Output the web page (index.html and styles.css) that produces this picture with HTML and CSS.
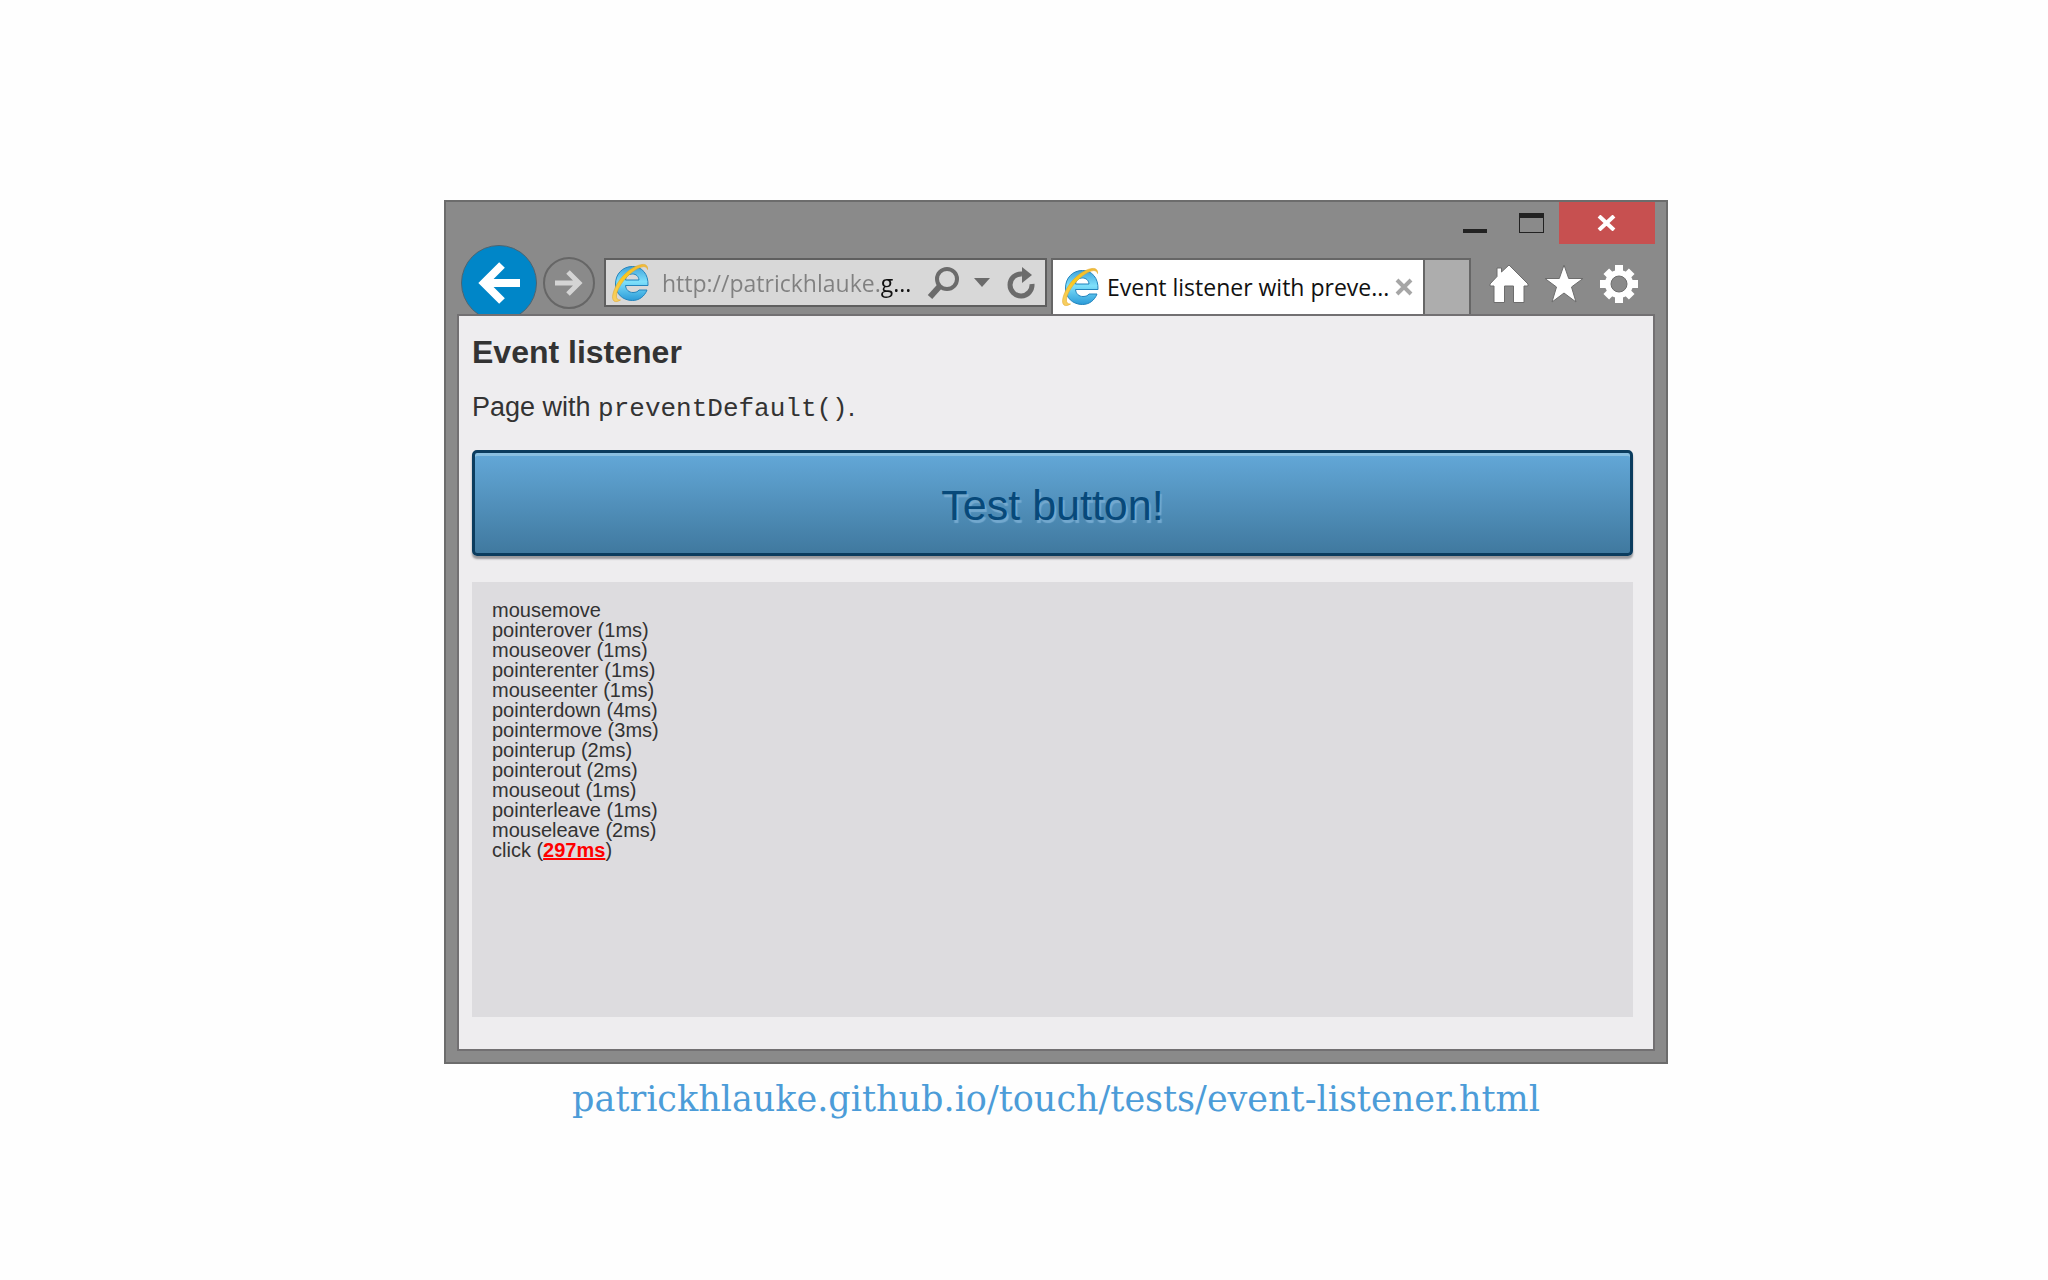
FILE: index.html
```html
<!DOCTYPE html>
<html lang="en">

<head>
    <title>Event listener</title>
    <meta charset="UTF-8">
    <meta name="viewport" content="width=device-width, initial-scale=1">
    <link rel="stylesheet" href="styles.css">
</head>

<body>
    <svg class="defs" width="0" height="0" aria-hidden="true">
        <defs>
            <linearGradient id="blue" x1="0" y1="0" x2="0" y2="1">
                <stop offset="0" stop-color="#3fa3da" />
                <stop offset="0.45" stop-color="#7fe0fb" />
                <stop offset="1" stop-color="#2b9bd8" />
            </linearGradient>
            <linearGradient id="gold" x1="0" y1="1" x2="1" y2="0">
                <stop offset="0" stop-color="#f7cf6b" />
                <stop offset="0.5" stop-color="#fbc91b" />
                <stop offset="1" stop-color="#f0b93a" />
            </linearGradient>
        </defs>
        <symbol id="ie" viewBox="0 0 38 40">
            <path d="M37 22.500H14.500C15 27 18 29.500 22 29.500C25 29.500 27 28.500 28 27H36C33.500 33.500 28 37.500 21.500 37.500C11.500 37.500 4.500 30.500 4.500 21C4.500 11 11.500 3.500 21.500 3.500C31 3.500 37.500 11 37 22.500ZM14.500 17H28C27.500 13 25 11 21.500 11C17.500 11 15.200 13 14.500 17Z"
                fill="url(#blue)" stroke="#2384bd" stroke-width="1" />
            <path d="M36.500 6.500C37 2.500 34.500 1 31 1.500C23 2.500 13 10 7 19.500C2 27.500 0 35.500 3 38C4.500 39.200 7 38.500 9.500 37C6.500 37 5 35.500 5.500 32C6.200 27 10 20.500 15 15C21 8.500 28 4 32.500 3.600C34.700 3.400 36 4.500 36.500 6.500Z"
                fill="url(#gold)" stroke="#e2a92c" stroke-width="0.600" />
        </symbol>
    </svg>

    <main class="slide">
        <div class="window">
            <div class="title-bar">
                <button class="title-button" type="button" aria-label="Minimize"><span class="minimize"></span></button>
                <button class="title-button" type="button" aria-label="Maximize"><span class="maximize"></span></button>
                <button class="title-button close" type="button" aria-label="Close">
                    <svg width="20" height="16" viewBox="0 0 20 16">
                        <path d="M2 1L17 15M17 1L2 15" stroke="#fff" stroke-width="4" />
                    </svg>
                </button>
            </div>

            <div class="nav-bar">
                <button class="back" type="button" aria-label="Back">
                    <svg width="44" height="42" viewBox="0 0 44 42">
                        <path d="M43 21H7M25 3L7 21L25 39" fill="none" stroke="#fff" stroke-width="8" />
                    </svg>
                </button>
                <button class="forward" type="button" aria-label="Forward">
                    <svg width="28" height="28" viewBox="0 0 28 28">
                        <path d="M0 14H24M13 3L24 14L13 25" fill="none" stroke="#d4d4d4" stroke-width="5" />
                    </svg>
                </button>

                <div class="address">
                    <svg class="ie-icon" width="38" height="40"><use href="#ie" /></svg>
                    <input class="address-input" type="text" value="http://patrickhlauke.g..." aria-label="Address" readonly>
                    <button class="tool" type="button" aria-label="Search">
                        <svg width="34" height="34" viewBox="0 0 34 34">
                            <circle cx="20" cy="13" r="10" fill="none" stroke="#6b6b6b" stroke-width="4" />
                            <path d="M12.500 20.500L3 31" stroke="#6b6b6b" stroke-width="6" />
                        </svg>
                    </button>
                    <button class="tool" type="button" aria-label="Show address bar history">
                        <svg width="16" height="9" viewBox="0 0 16 9">
                            <path d="M0 0H16L8 9Z" fill="#6b6b6b" />
                        </svg>
                    </button>
                    <button class="tool" type="button" aria-label="Refresh">
                        <svg width="33" height="34" viewBox="-4 0 33 34">
                            <path d="M15 8A11 11 0 1 0 25 18" fill="none" stroke="#6b6b6b" stroke-width="5" />
                            <path d="M15 1L25 9L15 17Z" fill="#6b6b6b" />
                        </svg>
                    </button>
                </div>

                <div class="tab">
                    <svg class="ie-icon" width="38" height="40"><use href="#ie" /></svg>
                    <span class="tab-title">Event listener with preve...</span>
                    <button class="tool" type="button" aria-label="Close tab">
                        <svg width="18" height="18" viewBox="0 0 18 18">
                            <path d="M2 2L16 16M16 2L2 16" stroke="#a6a6a6" stroke-width="4" />
                        </svg>
                    </button>
                </div>
                <button class="new-tab" type="button" aria-label="New tab"></button>

                <div class="toolbar">
                    <button class="tool" type="button" aria-label="Home">
                        <svg width="40" height="40" viewBox="0 0 40 40">
                            <path d="M20 1L12.500 8V4H8V12.500L1 20V22H5V38.500H15.500V22H24.500V38.500H35V22H39V20Z" fill="#fff"
                                stroke="#6d6d6d" stroke-width="1" />
                        </svg>
                    </button>
                    <button class="tool" type="button" aria-label="Favorites">
                        <svg width="40" height="40" viewBox="0 0 40 40">
                            <path d="M20 1L24.700 14.500H39L27.500 23L32 38L20 29L8 38L12.500 23L1 14.500H15.300Z" fill="#fff"
                                stroke="#6d6d6d" stroke-width="1" />
                        </svg>
                    </button>
                    <button class="tool" type="button" aria-label="Tools">
                        <svg width="40" height="40" viewBox="0 0 40 40">
                            <g fill="#fff">
                                <path d="M16 1H24V39H16ZM1 16H39V24H1Z" />
                                <path d="M16 2H24V38H16ZM2 16H38V24H2Z" transform="rotate(45 20 20)" />
                            </g>
                            <circle cx="20" cy="20" r="14" fill="#fff" />
                            <circle cx="20" cy="20" r="8" fill="#8a8a8a" stroke="#6d6d6d" stroke-width="1" />
                        </svg>
                    </button>
                </div>
            </div>

            <div class="page">
                <h1 class="heading">Event listener</h1>
                <p class="intro">Page with <code>preventDefault()</code>.</p>
                <button class="test-button" type="button">Test button!</button>
                <div class="log">
                    mousemove<br>
                    pointerover (1ms)<br>
                    mouseover (1ms)<br>
                    pointerenter (1ms)<br>
                    mouseenter (1ms)<br>
                    pointerdown (4ms)<br>
                    pointermove (3ms)<br>
                    pointerup (2ms)<br>
                    pointerout (2ms)<br>
                    mouseout (1ms)<br>
                    pointerleave (1ms)<br>
                    mouseleave (2ms)<br>
                    click (<strong class="delay">297ms</strong>)
                </div>
            </div>
        </div>
        <a class="source" href="https://patrickhlauke.github.io/touch/tests/event-listener.html">patrickhlauke.github.io/touch/tests/event-listener.html</a>
    </main>
</body>

</html>
```
FILE: styles.css
```css
* {
    box-sizing: border-box;
}

body {
    margin: 0;
    background-color: #fefefe;
    font-family: "Liberation Sans", Arial, sans-serif;
    color: #333;
}

button {
    padding: 0;
    border: none;
    background: none;
    font-family: inherit;
    cursor: pointer;
}

svg {
    display: block;
    flex-shrink: 0;
}

.defs {
    position: absolute;
}

.slide {
    min-height: 100vh;
    padding: 200px 0 0 64px;
    display: flex;
    flex-direction: column;
    align-items: center;
}

/* browser window */
.window {
    width: 100%;
    max-width: 1224px;
    padding-bottom: 11px;
    border: 2px solid #6c6c6c;
    background-color: #8a8a8a;
}

.title-bar {
    display: flex;
    justify-content: flex-end;
    padding-right: 11px;
}

.title-button {
    width: 56px;
    height: 42px;
    display: flex;
    align-items: flex-end;
    justify-content: center;
    padding-bottom: 11px;
}

.title-button.close {
    width: 96px;
    align-items: center;
    padding: 0;
    background-color: #c75050;
}

.minimize {
    width: 24px;
    height: 4px;
    background-color: #222;
}

.maximize {
    width: 25px;
    height: 20px;
    border: 1px solid #222;
    border-top-width: 5px;
}

.nav-bar {
    display: flex;
    align-items: flex-start;
    height: 70px;
    padding: 0 27px 0 15px;
    overflow: hidden;
}

.back,
.forward {
    display: flex;
    align-items: center;
    justify-content: center;
    flex-shrink: 0;
    border-radius: 50%;
}

.back {
    width: 76px;
    height: 76px;
    margin-top: 1px;
    border: 1px solid #4f6470;
    background-color: #0086c8;
}

.forward {
    width: 52px;
    height: 52px;
    margin: 13px 9px 0 6px;
    border: 2px solid #666;
}

.address {
    flex: 1;
    min-width: 0;
    height: 49px;
    margin: 14px 4px 0 0;
    padding: 0 9px 0 5px;
    display: flex;
    align-items: center;
    gap: 13px;
    border: 2px solid #5f5f5f;
    background-color: #d8d8d8;
}

/* host part of the url is darker than the rest */
.address-input {
    flex: 1;
    min-width: 0;
    padding: 0;
    border: none;
    outline: none;
    background: linear-gradient(to right, #808080 218px, #111 218px);
    -webkit-background-clip: text;
    background-clip: text;
    color: transparent;
    font-family: "Open Sans", "Noto Sans", sans-serif;
    font-size: 23px;
}

.tab {
    width: 374px;
    height: 56px;
    margin-top: 14px;
    padding: 0 10px 0 8px;
    display: flex;
    align-items: center;
    border: 2px solid #666;
    border-bottom: none;
    background-color: #fff;
    color: #111;
    font-family: "Open Sans", "Noto Sans", sans-serif;
    font-size: 23px;
}

.tab-title {
    flex: 1;
    margin-left: 8px;
    white-space: nowrap;
}

.new-tab {
    width: 46px;
    height: 56px;
    margin-top: 14px;
    border: 2px solid #666;
    border-width: 2px 2px 0 0;
    background-color: #adadad;
}

.toolbar {
    display: flex;
    gap: 15px;
    margin: 20px 0 0 18px;
}

/* page shown in the window */
.page {
    margin: 0 11px;
    padding: 18px 20px 32px 13px;
    border: 2px solid #727072;
    background-color: #eeedef;
}

.heading {
    margin: 0 0 21px;
    font-size: 32px;
    line-height: 36px;
}

.intro {
    margin: 0 0 25px;
    font-size: 27px;
    line-height: 32px;
}

.intro code {
    font-family: "Liberation Mono", "Courier New", monospace;
    font-size: 26px;
}

.test-button {
    display: block;
    width: 100%;
    height: 106px;
    padding-top: 5px;
    border: 3px solid #0b3c5e;
    border-radius: 5px;
    background: linear-gradient(#63a8d8, #40799f);
    box-shadow: inset 0 3px 0 #8abfe0, 0 3px 2px #99999c;
    color: #07497a;
    font-size: 43px;
    text-shadow: 2px 3px 1px #74a9cf;
}

.log {
    min-height: 435px;
    margin-top: 26px;
    padding: 18px 20px;
    background-color: #dddcdf;
    font-size: 20px;
    line-height: 20px;
}

.delay {
    color: #f00;
    text-decoration: underline;
}

.source {
    margin-top: 14px;
    color: #4c9cd8;
    font-family: "Roboto Slab", "DejaVu Serif", serif;
    font-size: 35px;
    line-height: 42px;
    text-decoration: none;
}
```
